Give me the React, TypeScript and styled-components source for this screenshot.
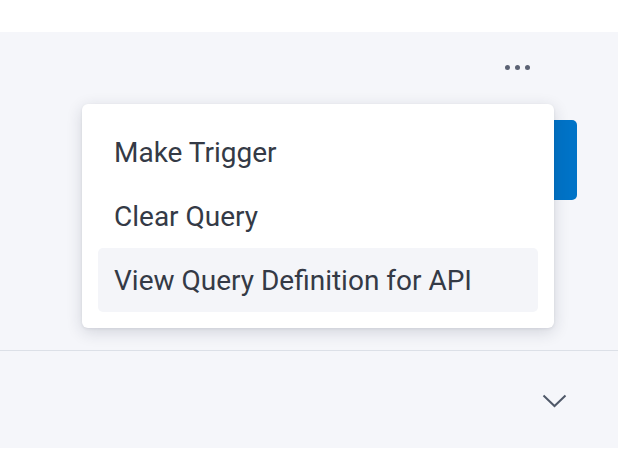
import React from "react";
import styled, { createGlobalStyle } from "styled-components";

const Global = createGlobalStyle`
  html, body { margin: 0; padding: 0; background: #ffffff; }
  body { font-family: Roboto, "Noto Sans", Arial, sans-serif; }
  * { box-sizing: border-box; }
`;

const Page = styled.div`
  width: 640px;
  height: 460px;
  padding-top: 32px;
  background: #ffffff;
`;

const Panel = styled.div`
  width: 618px;
  height: 416px;
  background: #f5f6fa;
  display: flex;
  flex-direction: column;
`;

const TopArea = styled.div`
  position: relative;
  height: 319px;
  border-bottom: 1px solid #dce0e7;
`;

const DotsRow = styled.div`
  display: flex;
  justify-content: flex-end;
  padding: 33px 88px 0 0;
`;

const DotsButton = styled.button`
  display: flex;
  gap: 5px;
  background: none;
  border: 0;
  padding: 0;
  cursor: pointer;
`;

const Dot = styled.span`
  width: 5px;
  height: 5px;
  border-radius: 50%;
  background: #5b6273;
`;

const ActionButton = styled.div`
  position: absolute;
  left: 480px;
  top: 88px;
  width: 97px;
  height: 80px;
  border-radius: 5px;
  background: #0073c7;
`;

const Menu = styled.div`
  position: absolute;
  left: 82px;
  top: 72px;
  width: 472px;
  padding: 16px;
  background: #ffffff;
  border-radius: 6px;
  box-shadow: 0 4px 16px rgba(30, 40, 60, 0.16), 0 1px 3px rgba(30, 40, 60, 0.08);
  display: flex;
  flex-direction: column;
`;

const MenuItem = styled.div<{ $active?: boolean }>`
  height: 64px;
  display: flex;
  align-items: center;
  padding-left: 16px;
  border-radius: 5px;
  font-size: 28px;
  color: #343a46;
  background: ${(p) => (p.$active ? "#f4f5f9" : "transparent")};
`;

const BottomArea = styled.div`
  flex: 1;
  display: flex;
  justify-content: flex-end;
  align-items: center;
  padding-right: 51px;
  padding-top: 2px;
`;

export default function App() {
  return (
    <>
      <Global />
      <Page>
        <Panel>
          <TopArea>
            <DotsRow>
              <DotsButton aria-label="More">
                <Dot />
                <Dot />
                <Dot />
              </DotsButton>
            </DotsRow>
            <ActionButton />
            <Menu>
              <MenuItem>Make Trigger</MenuItem>
              <MenuItem>Clear Query</MenuItem>
              <MenuItem $active>View Query Definition for API</MenuItem>
            </Menu>
          </TopArea>
          <BottomArea>
            <svg width="25" height="14" viewBox="0 0 25 14" fill="none">
              <path d="M1.5 1.5 L12.5 12 L23.5 1.5" stroke="#4f5868" strokeWidth="2" />
            </svg>
          </BottomArea>
        </Panel>
      </Page>
    </>
  );
}
